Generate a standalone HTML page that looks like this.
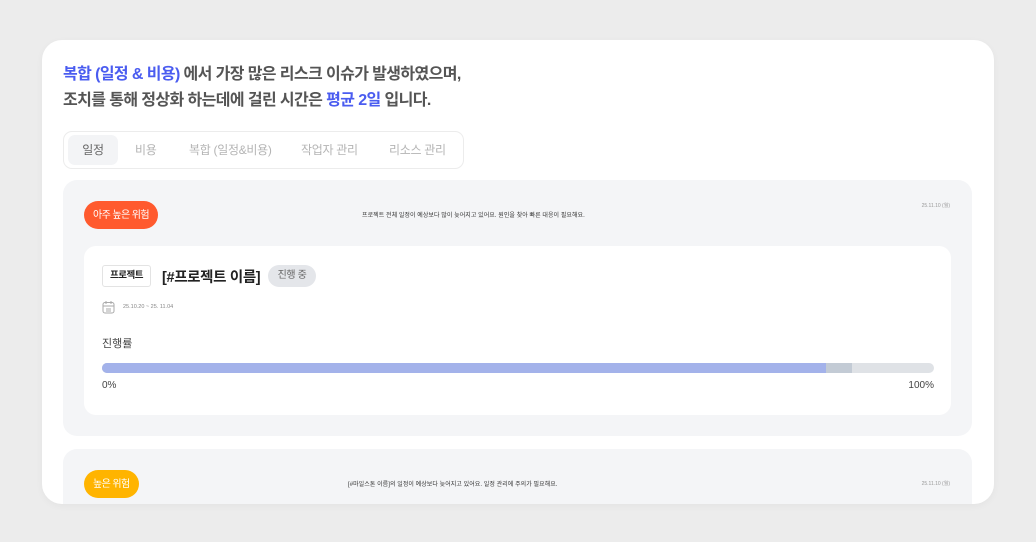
<!DOCTYPE html>
<html><head><meta charset="utf-8"><style>
*{margin:0;padding:0;box-sizing:border-box}
body{width:1036px;height:542px;background:#ececec;font-family:"Liberation Sans","Noto Sans CJK KR",sans-serif;position:relative;overflow:hidden}
.card{position:absolute;left:42px;top:40px;width:952px;height:464px;background:#fff;border-radius:20px;overflow:hidden;box-shadow:0 2px 8px rgba(0,0,0,.04)}
.h{position:absolute;left:21px;top:22px;font-size:16px;font-weight:bold;color:#555;line-height:26px;letter-spacing:-0.6px;white-space:nowrap}
.b{color:#4a5cf0}
.tabs{position:absolute;left:21px;top:91px;width:401px;height:38px;border:1px solid #ececec;border-radius:9px}
.tab{position:absolute;top:3px;height:30px;line-height:30px;font-size:12px;color:#b4b4b4;letter-spacing:-0.3px}
.tab.on{background:#f3f4f6;color:#666;border-radius:7px;width:50px;text-align:center;left:4px}
.sec{position:absolute;left:21px;width:909px;background:#f4f5f7;border-radius:14px}
.pill{position:absolute;left:21px;height:28px;line-height:29px;border-radius:14px;color:#fff;font-size:10px;padding:0 9px;letter-spacing:-0.6px}
.msg{position:absolute;font-size:6px;color:#333;letter-spacing:0.05px;white-space:nowrap}
.dt{position:absolute;right:22px;font-size:5px;color:#999}
.inner{position:absolute;left:21px;top:66px;width:867px;height:169px;background:#fff;border-radius:12px}
</style></head><body>
<div class="card">
<div class="h"><span class="b">복합 (일정 &amp; 비용)</span> 에서 가장 많은 리스크 이슈가 발생하였으며,<br>조치를 통해 정상화 하는데에 걸린 시간은 <span class="b">평균 2일</span> 입니다.</div>
<div class="tabs">
<div class="tab on">일정</div>
<div class="tab" style="left:71px">비용</div>
<div class="tab" style="left:125px">복합 (일정&amp;비용)</div>
<div class="tab" style="left:237px">작업자 관리</div>
<div class="tab" style="left:325px">리소스 관리</div>
</div>
<div class="sec" style="top:140px;height:256px">
<div class="pill" style="top:21px;background:#ff5a2e">아주 높은 위험</div>
<div class="msg" style="left:299px;top:30px">프로젝트 전체 일정이 예상보다 많이 늦어지고 있어요. 원인을 찾아 빠른 대응이 필요해요.</div>
<div class="dt" style="top:22px">25.11.10 (월)</div>
<div class="inner">
<div style="position:absolute;left:18px;top:19px;width:49px;height:22px;border:1px solid #e3e3e3;border-radius:3px;font-size:9.5px;font-weight:bold;text-align:center;line-height:20px;color:#222;letter-spacing:-0.5px">프로젝트</div>
<div style="position:absolute;left:78px;top:20px;font-size:14.5px;font-weight:bold;color:#222;letter-spacing:-0.35px;white-space:nowrap">[#프로젝트 이름]</div>
<div style="position:absolute;left:184px;top:19px;width:48px;height:22px;border-radius:11px;background:#e4e6ea;font-size:10px;color:#666;text-align:center;line-height:22px;letter-spacing:-0.4px">진행 중</div>
<svg style="position:absolute;left:18px;top:54px" width="13" height="14" viewBox="0 0 13 14" fill="none" stroke="#aaa" stroke-width="1"><rect x="1" y="2.5" width="11" height="10.5" rx="2"/><path d="M4 1v3M9 1v3M1 6h11M4 9h5M4 11h5"/></svg>
<div style="position:absolute;left:39px;top:58px;font-size:5.5px;color:#888">25.10.20 ~ 25. 11.04</div>
<div style="position:absolute;left:18px;top:89px;font-size:11px;color:#444">진행률</div>
<div style="position:absolute;left:18px;top:117px;width:832px;height:10px;border-radius:5px;background:#dfe2e6;overflow:hidden">
<div style="position:absolute;left:0;top:0;width:750px;height:10px;background:#c3cbd5"></div>
<div style="position:absolute;left:0;top:0;width:724px;height:10px;background:#a3b2ea"></div>
</div>
<div style="position:absolute;left:18px;top:134px;font-size:10px;color:#444">0%</div>
<div style="position:absolute;right:17px;top:134px;font-size:10px;color:#444">100%</div>
</div>
</div>
<div class="sec" style="top:409px;height:80px">
<div class="pill" style="top:21px;background:#ffb400">높은 위험</div>
<div class="msg" style="left:285px;top:30px">[#마일스톤 이름]의 일정이 예상보다 늦어지고 있어요. 일정 관리에 주의가 필요해요.</div>
<div class="dt" style="top:31px">25.11.10 (월)</div>
</div>
</div>
</body></html>
